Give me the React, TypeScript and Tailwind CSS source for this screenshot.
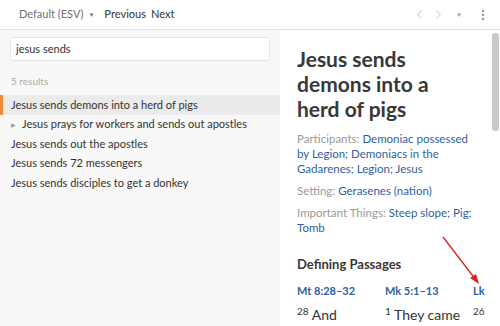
import { ChevronLeft, ChevronRight, MoreVertical } from 'lucide-react'

const results = [
  { id: 1, title: 'Jesus sends demons into a herd of pigs', active: true },
  { id: 2, title: 'Jesus prays for workers and sends out apostles', nested: true },
  { id: 3, title: 'Jesus sends out the apostles' },
  { id: 4, title: 'Jesus sends 72 messengers' },
  { id: 5, title: 'Jesus sends disciples to get a donkey' },
]

const passages = [
  { ref: 'Mt 8:28–32', verse: '28', text: 'And' },
  { ref: 'Mk 5:1–13', verse: '1', text: 'They came' },
  { ref: 'Lk', verse: '26', text: '' },
]

function Links({ items }: { items: string[] }) {
  return <span className="text-[#2f5f9e]">{items.join('; ')}</span>
}

export default function App() {
  return (
    <div className="relative flex h-[326px] w-[500px] flex-col overflow-hidden bg-white font-['Lato',sans-serif] text-[#333]">
      {/* toolbar */}
      <div className="flex h-[30px] shrink-0 items-center border-b border-[#e2e2e2] bg-white pl-[19px] pr-[10px]">
        <span className="text-[11px] text-[#707070]">Default (ESV)</span>
        <span className="ml-[5px] text-[6px] text-[#707070]">▼</span>
        <span className="ml-[10px] text-[11px] font-medium text-[#444]">Previous</span>
        <span className="ml-[5px] text-[11px] font-medium text-[#444]">Next</span>
        <div className="ml-auto flex items-center text-[#c4c4c4]">
          <ChevronLeft size={15} strokeWidth={1.6} />
          <ChevronRight size={15} strokeWidth={1.6} className="ml-[4px]" />
          <span className="ml-[10px] text-[6px] text-[#999]">▼</span>
          <MoreVertical size={14} strokeWidth={2.4} className="ml-[14px] text-[#999]" />
        </div>
      </div>

      <div className="flex min-h-0 flex-1">
        {/* search side */}
        <div className="flex w-[280px] shrink-0 flex-col bg-[#f8f8f8]">
          <div className="px-[10px] pt-[7px]">
            <div className="flex h-[24px] items-center rounded-[3px] border border-[#e6e6e6] bg-white px-[5px] text-[11px] text-[#333]">
              jesus sends
            </div>
          </div>
          <div className="mt-[13px] px-[11px] text-[10px] text-[#aaa]">5 results</div>
          <div className="mt-[6px] flex flex-col">
            {results.map((r) => (
              <div
                key={r.id}
                className={`flex h-[19.5px] items-center text-[11px] ${
                  r.active ? 'border-l-[3px] border-[#f08b3b] bg-[#ebebeb] pl-[8px]' : 'pl-[11px]'
                }`}
              >
                {r.nested && <span className="mr-[6px] text-[6px] text-[#999]">▶</span>}
                <span>{r.title}</span>
              </div>
            ))}
          </div>
        </div>

        {/* detail side */}
        <div className="flex min-w-0 flex-1">
          <div className="min-w-0 flex-1 overflow-hidden pl-[17px] pt-[16px]">
            <h1 className="w-[170px] text-[21px] font-bold leading-[25px] text-[#383838]">
              Jesus sends demons into a herd of pigs
            </h1>
            <div className="mt-[10px] flex w-[178px] flex-col gap-[7px] text-[11.5px] leading-[15px]">
              <p>
                <span className="text-[#9a9a9a]">Participants: </span>
                <Links items={['Demoniac possessed by Legion', 'Demoniacs in the Gadarenes', 'Legion', 'Jesus']} />
              </p>
              <p>
                <span className="text-[#9a9a9a]">Setting: </span>
                <Links items={['Gerasenes (nation)']} />
              </p>
              <p>
                <span className="text-[#9a9a9a]">Important Things: </span>
                <Links items={['Steep slope', 'Pig', 'Tomb']} />
              </p>
            </div>
            <h2 className="mt-[20px] text-[13px] font-bold text-[#383838]">Defining Passages</h2>
            <div className="mt-[8px] flex w-[260px]">
              {passages.map((p) => (
                <div key={p.ref} className="w-[88px] shrink-0">
                  <div className="text-[11px] font-bold text-[#2f5f9e]">{p.ref}</div>
                  <div className="mt-[7px] text-[14px] leading-[18px]">
                    <sup className="text-[10px]">{p.verse}</sup> {p.text}
                  </div>
                </div>
              ))}
            </div>
          </div>
          <div className="flex w-[10px] shrink-0 justify-center pt-[3px]">
            <div className="h-[98px] w-[7px] rounded-[3px] bg-[#c9c9c9]" />
          </div>
        </div>
      </div>

      {/* annotation arrow */}
      <svg className="pointer-events-none absolute left-0 top-0" width="500" height="326">
        <line x1="443" y1="237" x2="476" y2="280" stroke="#e02020" strokeWidth="1.3" />
        <polygon points="479,284 470,278 476,274" fill="#e02020" />
      </svg>
    </div>
  )
}
